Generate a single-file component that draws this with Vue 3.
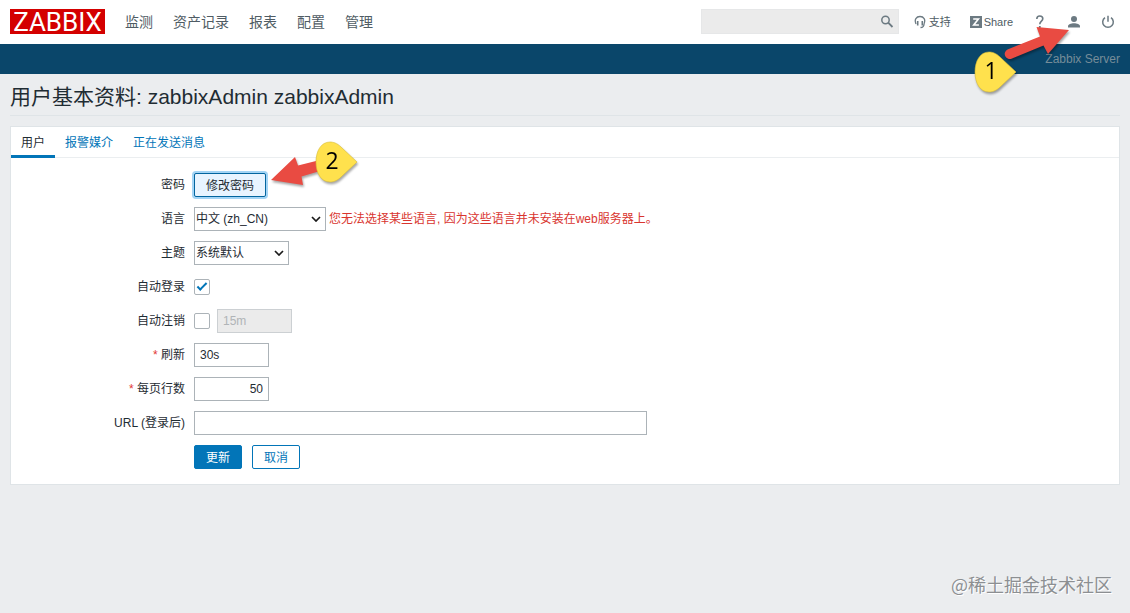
<template>
  <div class="page">
    <header class="top">
      <a href="#" class="logo">ZABBIX</a>
      <nav class="menu">
        <a v-for="m in menu" :key="m" href="#">{{ m }}</a>
      </nav>
      <form class="search" @submit.prevent>
        <input v-model="keyword" type="text" aria-label="搜索" />
        <button type="submit" aria-label="搜索">
          <svg width="14" height="14" viewBox="0 0 14 14" fill="none" stroke="#6c7a82">
            <circle cx="5.5" cy="5" r="3.7" stroke-width="1.5" />
            <path d="M8.2 7.7l4.300 4.300" stroke-width="1.800" />
          </svg>
        </button>
      </form>
      <div class="tools">
        <a href="#" class="tool support">
          <svg width="13" height="14" viewBox="0 0 13 14" fill="none" stroke="#6c7a82">
            <path d="M2 9C0 4.500 2.300 1.500 6 1.500S12 4.500 10 9" stroke-width="1.300" />
            <path d="M3.700 6v4.500M8.300 6v4.500" stroke-width="1.600" />
            <path d="M10 9c0 2.500-1 3.500-3.500 3.500" stroke-width="1.300" />
          </svg>
          <span>支持</span>
        </a>
        <a href="#" class="tool share">
          <svg width="12" height="12" viewBox="0 0 12 12">
            <rect width="12" height="12" fill="#6c7a82" />
            <path d="M3.200 3h5.200L3.700 9h5.200" fill="none" stroke="#fff" stroke-width="1.600" />
          </svg>
          <span>Share</span>
        </a>
        <a href="#" class="tool icon" aria-label="帮助">
          <svg width="14" height="14" viewBox="0 0 14 14" fill="none" stroke="#6c7a82">
            <path d="M3.800 4C3.800 2 5 1 6.800 1s3 1.100 3 2.700C9.800 6 6.800 6.200 6.800 9.200" stroke-width="1.600" />
            <path d="M6.800 11v2" stroke-width="1.800" />
          </svg>
        </a>
        <a href="#" class="tool icon" aria-label="用户基本资料">
          <svg width="14" height="14" viewBox="0 0 14 14" fill="#6c7a82">
            <circle cx="7" cy="4" r="3" />
            <path d="M1 12.500v-1.300C1 9.300 4 8.300 7 8.300s6 1 6 2.900v1.300z" />
          </svg>
        </a>
        <a href="#" class="tool icon" aria-label="退出">
          <svg width="14" height="14" viewBox="0 0 14 14" fill="none" stroke="#6c7a82" stroke-width="1.500">
            <path d="M4 2.700a5.300 5.300 0 1 0 6 0M7 .8v6" />
          </svg>
        </a>
      </div>
      <!-- 步骤 1 -->
      <svg class="mark mark-1" width="100" height="76" viewBox="0 0 100 76">
        <path d="M36.500 27.500L69 14.500L65.500 5L98 8L77 32L72.500 23.500L41 36.500A5 5 0 0 1 36.500 27.500z" fill="#e94b42" />
        <path d="M45 50L29 65C25 69 21 70 18 70C9 70 4 61 4 50S9 30 18 30C21 30 25 31 29 35z" fill="#ffe14d" stroke="#d9bd35" stroke-width=".6" stroke-linejoin="round" />
        <text x="20" y="57" text-anchor="middle">1</text>
      </svg>
    </header>

    <div class="bar">Zabbix Server</div>

    <main class="content">
      <h1>用户基本资料: zabbixAdmin zabbixAdmin</h1>

      <section class="panel">
        <div class="tabs" role="tablist">
          <button v-for="(t, i) in tabs" :key="t" type="button" role="tab"
            :aria-selected="tab === i" :class="{ on: tab === i }" @click="tab = i">{{ t }}</button>
        </div>

        <form class="form" @submit.prevent>
          <label for="password">密码</label>
          <div class="field password">
            <button id="password" type="button" class="btn focus">修改密码</button>
            <!-- 步骤 2 -->
            <svg class="mark mark-2" width="92" height="48" viewBox="0 0 92 48">
              <path d="M1 40L25 17L28 25.500L50 20V31L31.500 36.500L33 45z" fill="#e94b42" />
              <path d="M87 22L71 37C67 41 63 42 60 42C51 42 46 33 46 22S51 2 60 2C63 2 67 3 71 7z" fill="#ffe14d" stroke="#d9bd35" stroke-width=".6" stroke-linejoin="round" />
              <text x="62" y="29" text-anchor="middle">2</text>
            </svg>
          </div>

          <label for="lang">语言</label>
          <div class="field">
            <div class="select lang">
              <select id="lang" v-model="form.lang">
                <option value="zh_CN">中文 (zh_CN)</option>
                <option value="en_GB">English (en_GB)</option>
              </select>
              <svg width="10" height="6" viewBox="0 0 10 6"><path d="M1 1l4 4 4-4" /></svg>
            </div>
            <span class="error">您无法选择某些语言, 因为这些语言并未安装在web服务器上。</span>
          </div>

          <label for="theme">主题</label>
          <div class="field">
            <div class="select theme">
              <select id="theme" v-model="form.theme">
                <option value="default">系统默认</option>
              </select>
              <svg width="10" height="6" viewBox="0 0 10 6"><path d="M1 1l4 4 4-4" /></svg>
            </div>
          </div>

          <label for="autologin">自动登录</label>
          <div class="field">
            <input id="autologin" v-model="form.autologin" type="checkbox" />
          </div>

          <label for="autologout">自动注销</label>
          <div class="field logout">
            <input id="autologout" v-model="form.autologout" type="checkbox" />
            <input v-model="form.logoutTime" type="text" class="short" aria-label="自动注销时间" :disabled="!form.autologout" />
          </div>

          <label for="refresh" class="required">刷新</label>
          <div class="field">
            <input id="refresh" v-model="form.refresh" type="text" class="short" />
          </div>

          <label for="rows" class="required">每页行数</label>
          <div class="field">
            <input id="rows" v-model="form.rows" type="text" class="short num" />
          </div>

          <label for="url">URL (登录后)</label>
          <div class="field">
            <input id="url" v-model="form.url" type="text" class="long" />
          </div>

          <div class="field actions">
            <button type="submit" class="btn primary">更新</button>
            <button type="button" class="btn">取消</button>
          </div>
        </form>
      </section>
    </main>

    <div class="watermark">@稀土掘金技术社区</div>
  </div>
</template>

<script setup>
import { ref, reactive } from 'vue'

const menu = ['监测', '资产记录', '报表', '配置', '管理']
const tabs = ['用户', '报警媒介', '正在发送消息']

const tab = ref(0)
const keyword = ref('')

const form = reactive({
  lang: 'zh_CN',
  theme: 'default',
  autologin: true,
  autologout: false,
  logoutTime: '15m',
  refresh: '30s',
  rows: '50',
  url: '',
})
</script>

<style>
body {
  margin: 0;
  background: #ebedef;
}
</style>

<style scoped>
.page {
  position: relative;
  min-height: 100vh;
  font-family: "Liberation Sans", "Noto Sans CJK SC", sans-serif;
  font-size: 12px;
  color: #1f2c33;
}

.page * {
  box-sizing: border-box;
}

a {
  text-decoration: none;
}

button,
input,
select {
  font: inherit;
  color: inherit;
  margin: 0;
}

/* ---- 顶部 ---- */
.top {
  position: relative;
  display: flex;
  align-items: center;
  height: 44px;
  padding: 0 10px 1px;
  background: #fff;
}

.logo {
  width: 95px;
  height: 25px;
  background: #d40000;
  color: #fff;
  font-family: Roboto, sans-serif;
  font-size: 26px;
  line-height: 26px;
  text-align: center;
}

.menu {
  display: flex;
  gap: 20px;
  margin-left: 20px;
}

.menu a {
  font-size: 14px;
  line-height: 20px;
  color: #4f5c64;
}

.search {
  display: flex;
  width: 198px;
  height: 25px;
  margin-left: auto;
  background: #ebebeb;
  border: 1px solid #e6e7e8;
}

.search input {
  flex: 1;
  min-width: 0;
  padding: 0 5px;
  border: 0;
  background: none;
}

.search button {
  display: flex;
  align-items: center;
  padding: 0 4px;
  border: 0;
  background: none;
}

.tools {
  display: flex;
  align-items: center;
  margin-left: 15px;
  padding-right: 5px;
}

.tool {
  display: flex;
  align-items: center;
  gap: 2px;
  font-size: 11px;
  line-height: 16px;
  color: #4f5c64;
}

.share {
  margin-left: 19px;
}

.icon {
  margin-left: 20px;
}

.bar {
  height: 30px;
  padding: 0 10px;
  background: #0a466a;
  color: #768d99;
  line-height: 30px;
  text-align: right;
}

/* ---- 内容 ---- */
.content {
  padding: 0 10px;
}

h1 {
  margin: 0 0 10px;
  padding: 9px 0 4px;
  border-bottom: 1px solid #dfe4e7;
  font-size: 21px;
  font-weight: normal;
  line-height: 28px;
}

.panel {
  background: #fff;
  border: 1px solid #dfe4e7;
}

.tabs {
  display: flex;
  height: 31px;
  border-bottom: 1px solid #ebeef0;
}

.tabs button {
  height: 31px;
  padding: 0 10px;
  border: 0;
  border-bottom: 3px solid transparent;
  background: none;
  color: #0275b8;
  cursor: pointer;
}

.tabs button.on {
  border-color: #0275b8;
  color: #1f2c33;
}

.form {
  display: grid;
  grid-template-columns: 174px 1fr;
  grid-auto-rows: 24px;
  gap: 10px 9px;
  padding: 15px 0;
}

.form label {
  line-height: 24px;
  text-align: right;
}

.required::before {
  content: "* ";
  color: #e33734;
}

.field {
  display: flex;
  align-items: center;
  gap: 3px;
}

.password {
  position: relative;
}

.logout {
  gap: 7px;
}

.actions {
  grid-column: 2;
  gap: 10px;
}

.error {
  line-height: 24px;
  color: #d9352f;
}

.btn {
  height: 24px;
  padding: 0 11px 1px;
  border: 1px solid #0275b8;
  border-radius: 2px;
  background: #fff;
  color: #0275b8;
  cursor: pointer;
}

.btn.primary {
  background: #0275b8;
  color: #fff;
}

.btn.focus {
  border-color: #02659f;
  background: #e8f4ff;
  box-shadow: 0 0 0 2px #a3d4f5;
  color: #1f2c33;
}

.select {
  display: grid;
  align-items: center;
}

.select > * {
  grid-area: 1 / 1;
}

.select select {
  appearance: none;
  width: 100%;
  height: 24px;
  padding: 0 20px 0 1px;
  border: 1px solid #acb3b8;
  border-radius: 0;
  background: #fff;
}

.select svg {
  justify-self: end;
  margin-right: 5px;
  fill: none;
  stroke: #1a1a1a;
  stroke-width: 1.7;
  pointer-events: none;
}

.lang {
  width: 132px;
}

.theme {
  width: 95px;
}

.form input[type="text"] {
  height: 24px;
  padding: 0 5px;
  border: 1px solid #acb3b8;
  background: #fff;
}

.form input[type="text"]:disabled {
  border-color: #ccd0d3;
  background: #ebebeb;
  color: #b0b4b7;
}

.form .short {
  width: 75px;
}

.form .num {
  text-align: right;
}

.form .long {
  width: 453px;
}

input[type="checkbox"] {
  appearance: none;
  width: 16px;
  height: 16px;
  border: 1px solid #acb3b8;
  border-radius: 2px;
  background: #fff;
}

input[type="checkbox"]:checked::before {
  content: "";
  display: block;
  width: 8px;
  height: 3px;
  margin: 3px 0 0 2px;
  border: solid #0275b8;
  border-width: 0 0 2px 2px;
  transform: rotate(-45deg);
}

/* ---- 标注 ---- */
.mark {
  position: absolute;
  pointer-events: none;
  filter: drop-shadow(1px 2px 1px rgba(0, 0, 0, 0.35));
}

.mark text {
  font-family: "Open Sans", sans-serif;
  font-size: 23px;
  fill: #000;
}

.mark-1 {
  top: 22px;
  right: 59px;
}

.mark-2 {
  top: -33px;
  left: 76px;
}

.watermark {
  position: absolute;
  right: 18px;
  bottom: 16px;
  font-family: "Noto Sans CJK SC", sans-serif;
  font-size: 18px;
  line-height: 26px;
  color: #8c8f92;
  text-shadow: 1px 1px 0 #fff;
}
</style>
